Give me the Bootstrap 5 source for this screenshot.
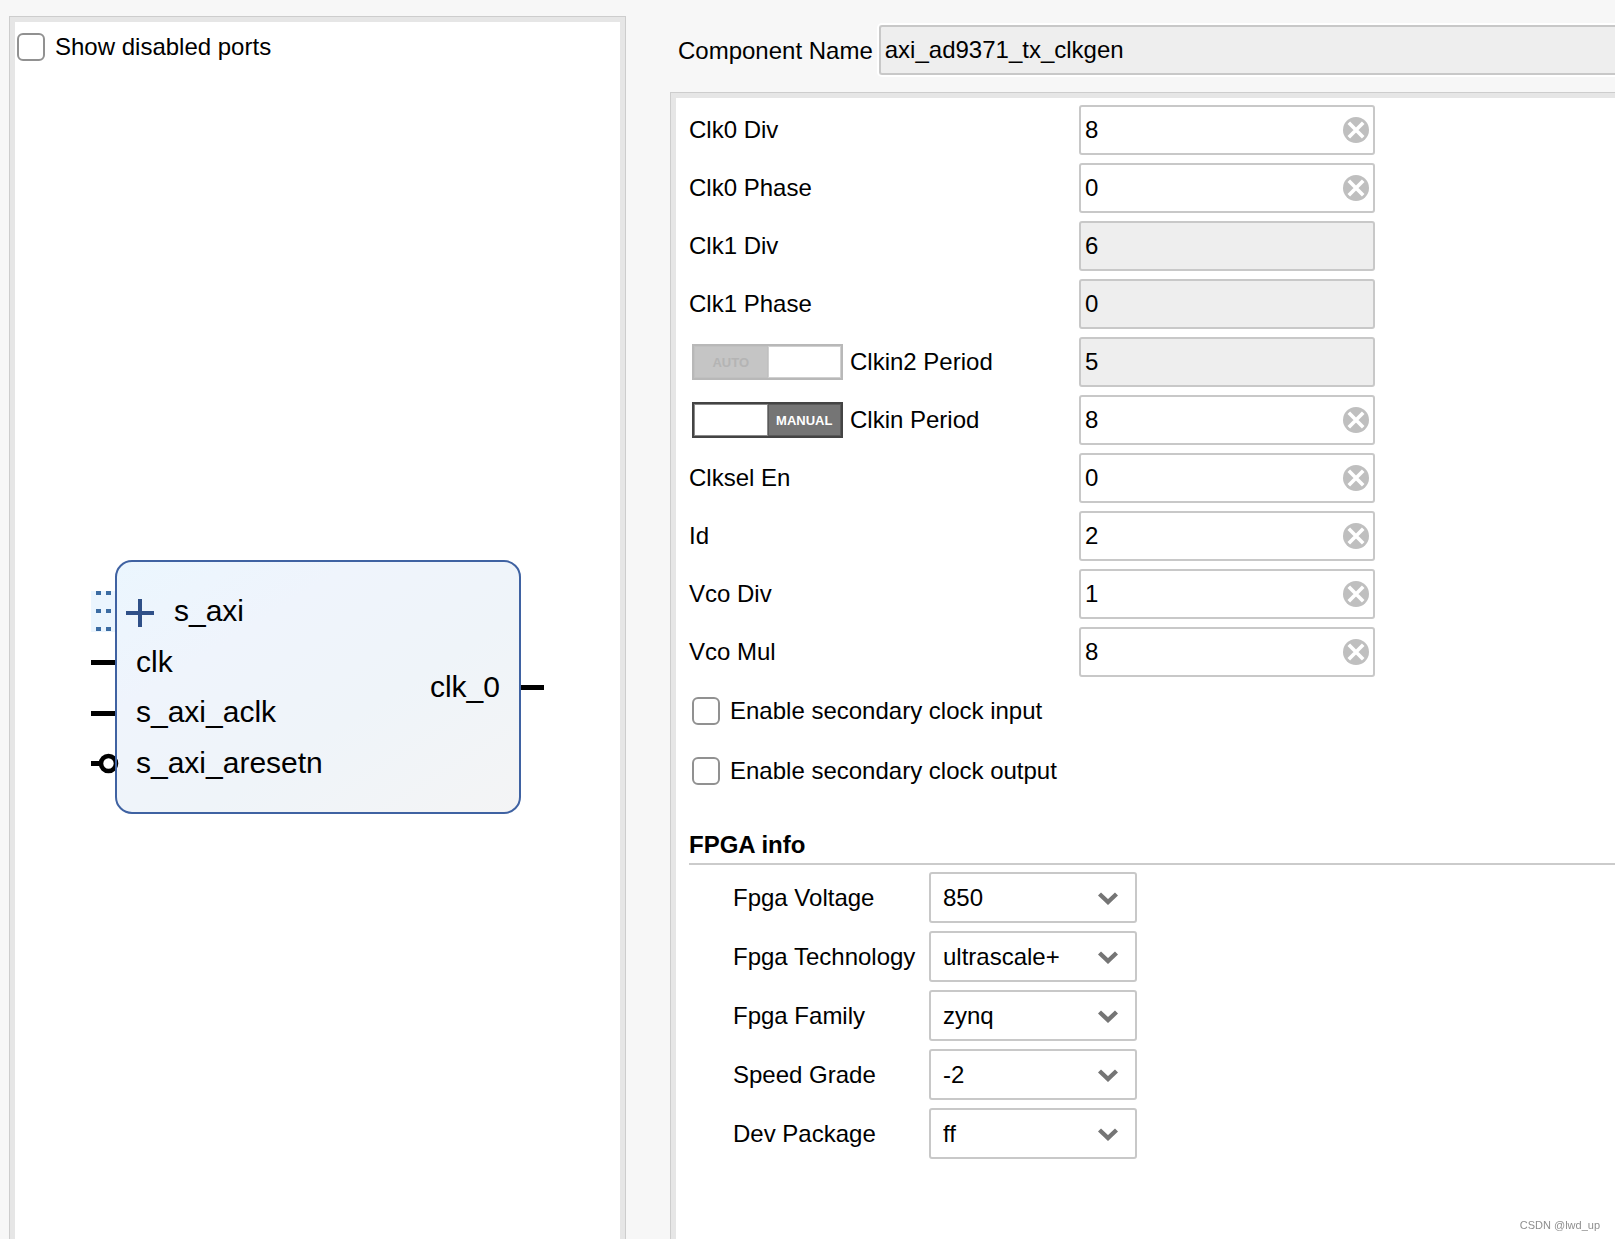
<!DOCTYPE html>
<html lang="en">
<head>
<meta charset="utf-8">
<meta name="viewport" content="width=device-width, initial-scale=1">
<title>axi_ad9371_tx_clkgen</title>
<link rel="stylesheet" href="https://cdn.jsdelivr.net/npm/bootstrap@5.3.0/dist/css/bootstrap.min.css">
<style>
  body {
    font-family: "Liberation Sans", Arial, sans-serif;
    font-size: 24px;
    line-height: 28px;
    color: #000;
    background: #f7f7f7;
  }
  .customizer {
    display: grid;
    grid-template-columns: minmax(0, 617fr) minmax(0, 945fr);
    column-gap: 44px;
    padding-left: 9px;
  }
  .pane {
    background: #fff;
    border: 5px solid #e6e6e6;
    border-bottom: 0;
    outline: 1px solid #cdcdcd;
    outline-offset: 0;
    margin: 1px 1px 0 1px;
  }
  .pane-ports { margin-top: 17px; }
  .pane-params { border-right: 0; margin-right: 0; padding: 7px 0 0 13px; }

  .form-check-input.tick {
    width: 28px;
    height: 28px;
    margin: 0;
    border: 2px solid #919191;
    border-radius: 6px;
    background-color: #fff;
    flex: none;
  }
  .tick-line { gap: 10px; }
  .ports-head { padding: 11px 2px; }
  .stage { padding-top: 62px; }
  .stage text { font-size: 30px; fill: #000; }

  .name-line { height: 76px; padding: 25px 0 0 8px; column-gap: 6px; }
  .form-control.field {
    height: 50px;
    padding: 0 4px;
    border: 2px solid #c8c8c8;
    border-radius: 3px;
    font-size: 24px;
    line-height: 28px;
    color: #000;
    background: #fff;
  }
  .form-control.field:disabled { background: #eee; opacity: 1; }
  .form-control.name-field {
    border-right: 0;
    border-radius: 3px 0 0 3px;
    box-shadow: 0 0 0 2px #fff;
  }
  .params { display: grid; row-gap: 8px; }
  .param-line { display: grid; grid-template-columns: 390px 296px; align-items: center; }
  .clear-btn {
    position: absolute;
    right: 6px;
    top: 12px;
    width: 26px;
    height: 26px;
    padding: 0;
    border: 0;
    background: none;
    display: flex;
  }
  .mode {
    width: 151px;
    height: 36px;
    margin: 0 7px 0 3px;
    padding: 0;
    border: 2px solid #444;
    background: #fff;
    display: flex;
    font-size: 13px;
    line-height: 31px;
    font-weight: 700;
  }
  .mode span { flex: 1 1 0; height: 32px; border: 1px solid #8a8a8a; }
  .mode .lit { background: #757575; color: #fff; border-color: #5a5a5a; }
  .mode:disabled { border-color: #b8b8b8; }
  .mode:disabled span { border-color: #d0d0d0; }
  .mode:disabled .lit { background: #c5c5c5; color: #b4b4b4; border-color: #c0c0c0; }

  .ticks { padding: 4px 0 0 3px; }
  .ticks .tick-line { height: 60px; }
  .group-title {
    margin: 30px 0 7px;
    padding-bottom: 4px;
    border-bottom: 2px solid #cbcbcb;
    font-size: 24px;
    line-height: 28px;
    font-weight: 700;
  }
  .fpga { padding-left: 44px; display: grid; row-gap: 8px; }
  .fpga-line { display: grid; grid-template-columns: 196px 208px; align-items: center; }
  .form-select.pick {
    height: 51px;
    padding: 0 44px 0 12px;
    border: 2px solid #c8c8c8;
    border-radius: 3px;
    font-size: 24px;
    line-height: 28px;
    color: #000;
    background-color: #fff;
    background-image: url("data:image/svg+xml,%3csvg xmlns='http://www.w3.org/2000/svg' viewBox='0 0 20 14'%3e%3cpath d='M1.5 3 10 11 18.5 3' fill='none' stroke='%23757575' stroke-width='4.4'/%3e%3c/svg%3e");
    background-size: 20px 14px;
    background-position: right 17px center;
  }
  .credit { position: fixed; right: 15px; bottom: 7px; font-size: 11px; line-height: 14px; color: #8f8f8f; }
</style>
<script src="https://cdn.jsdelivr.net/npm/bootstrap@5.3.0/dist/js/bootstrap.bundle.min.js"></script>
</head>
<body>
<svg class="d-none" aria-hidden="true">
  <symbol id="clear" viewBox="0 0 26 26">
    <circle cx="13" cy="13" r="13" fill="#bfbfbf"/>
    <path d="M5.8 5.800 20.2 20.2M20.2 5.800 5.800 20.2" stroke="#fff" stroke-width="3.6"/>
  </symbol>
</svg>

<main class="customizer vh-100 overflow-hidden">
  <section class="pane pane-ports d-flex flex-column">
    <div class="ports-head tick-line d-flex align-items-center">
      <input class="form-check-input tick" type="checkbox" id="showPorts">
      <label for="showPorts">Show disabled ports</label>
    </div>
    <div class="stage flex-grow-1 d-flex align-items-center justify-content-center">
      <svg width="453" height="254" viewBox="91 560 453 254" role="img" aria-label="Block symbol">
        <defs>
          <linearGradient id="body" x1="0" y1="0" x2="1" y2="1">
            <stop offset="0" stop-color="#ebf6fe"/>
            <stop offset=".3" stop-color="#eff4fc"/>
            <stop offset=".6" stop-color="#eff4f9"/>
            <stop offset="1" stop-color="#f4f4f5"/>
          </linearGradient>
        </defs>
        <rect x="91" y="591" width="25" height="41" fill="#ebf5fe"/>
        <path d="M96 593h5m5 0h5M96 611h5m5 0h5M96 629h5m5 0h5" stroke="#3b6ca3" stroke-width="4"/>
        <path d="M91 662.5h25M91 713.5h25M520 687.5h24" stroke="#000" stroke-width="5"/>
        <rect x="116" y="561" width="404" height="252" rx="16" fill="url(#body)" stroke="#3f62a2" stroke-width="2"/>
        <path d="M91 763.5h9" stroke="#000" stroke-width="5"/>
        <circle cx="108.5" cy="763.5" r="7.5" fill="#fff" stroke="#000" stroke-width="4.6"/>
        <path d="M116 750v27" stroke="#3f62a2" stroke-width="2"/>
        <path d="M126 613h28M140 599v28" stroke="#2f5088" stroke-width="4"/>
        <text x="174" y="621">s_axi</text>
        <text x="136" y="672">clk</text>
        <text x="136" y="722">s_axi_aclk</text>
        <text x="136" y="773">s_axi_aresetn</text>
        <text x="500" y="697" text-anchor="end">clk_0</text>
      </svg>
    </div>
  </section>

  <section class="d-flex flex-column">
    <div class="name-line d-flex align-items-start flex-shrink-0 mb-3">
      <label class="text-nowrap lh-1 align-self-center" for="compName">Component Name</label>
      <input class="form-control field name-field" id="compName" value="axi_ad9371_tx_clkgen" disabled>
    </div>

    <div class="pane pane-params flex-grow-1">
      <div class="params">
        <div class="param-line"><label for="p0">Clk0 Div</label>
          <div class="position-relative"><input class="form-control field" id="p0" value="8"><button class="clear-btn" type="button" aria-label="Clear"><svg width="26" height="26"><use href="#clear"/></svg></button></div></div>
        <div class="param-line"><label for="p1">Clk0 Phase</label>
          <div class="position-relative"><input class="form-control field" id="p1" value="0"><button class="clear-btn" type="button" aria-label="Clear"><svg width="26" height="26"><use href="#clear"/></svg></button></div></div>
        <div class="param-line"><label for="p2">Clk1 Div</label>
          <input class="form-control field" id="p2" value="6" disabled></div>
        <div class="param-line"><label for="p3">Clk1 Phase</label>
          <input class="form-control field" id="p3" value="0" disabled></div>
        <div class="param-line"><div class="d-flex align-items-center"><button class="mode" type="button" aria-label="Clkin2 Period mode" disabled><span class="lit">AUTO</span><span></span></button><label for="p4">Clkin2 Period</label></div>
          <input class="form-control field" id="p4" value="5" disabled></div>
        <div class="param-line"><div class="d-flex align-items-center"><button class="mode" type="button" aria-label="Clkin Period mode"><span></span><span class="lit">MANUAL</span></button><label for="p5">Clkin Period</label></div>
          <div class="position-relative"><input class="form-control field" id="p5" value="8"><button class="clear-btn" type="button" aria-label="Clear"><svg width="26" height="26"><use href="#clear"/></svg></button></div></div>
        <div class="param-line"><label for="p6">Clksel En</label>
          <div class="position-relative"><input class="form-control field" id="p6" value="0"><button class="clear-btn" type="button" aria-label="Clear"><svg width="26" height="26"><use href="#clear"/></svg></button></div></div>
        <div class="param-line"><label for="p7">Id</label>
          <div class="position-relative"><input class="form-control field" id="p7" value="2"><button class="clear-btn" type="button" aria-label="Clear"><svg width="26" height="26"><use href="#clear"/></svg></button></div></div>
        <div class="param-line"><label for="p8">Vco Div</label>
          <div class="position-relative"><input class="form-control field" id="p8" value="1"><button class="clear-btn" type="button" aria-label="Clear"><svg width="26" height="26"><use href="#clear"/></svg></button></div></div>
        <div class="param-line"><label for="p9">Vco Mul</label>
          <div class="position-relative"><input class="form-control field" id="p9" value="8"><button class="clear-btn" type="button" aria-label="Clear"><svg width="26" height="26"><use href="#clear"/></svg></button></div></div>
      </div>

      <div class="ticks">
        <div class="tick-line d-flex align-items-center"><input class="form-check-input tick" type="checkbox" id="secIn"><label for="secIn">Enable secondary clock input</label></div>
        <div class="tick-line d-flex align-items-center"><input class="form-check-input tick" type="checkbox" id="secOut"><label for="secOut">Enable secondary clock output</label></div>
      </div>

      <h2 class="group-title">FPGA info</h2>
      <div class="fpga">
        <div class="fpga-line"><label for="f0">Fpga Voltage</label><select class="form-select pick" id="f0"><option>850</option></select></div>
        <div class="fpga-line"><label for="f1">Fpga Technology</label><select class="form-select pick" id="f1"><option>ultrascale+</option></select></div>
        <div class="fpga-line"><label for="f2">Fpga Family</label><select class="form-select pick" id="f2"><option>zynq</option></select></div>
        <div class="fpga-line"><label for="f3">Speed Grade</label><select class="form-select pick" id="f3"><option>-2</option></select></div>
        <div class="fpga-line"><label for="f4">Dev Package</label><select class="form-select pick" id="f4"><option>ff</option></select></div>
      </div>
    </div>
  </section>
</main>
<div class="credit">CSDN @lwd_up</div>
</body>
</html>
